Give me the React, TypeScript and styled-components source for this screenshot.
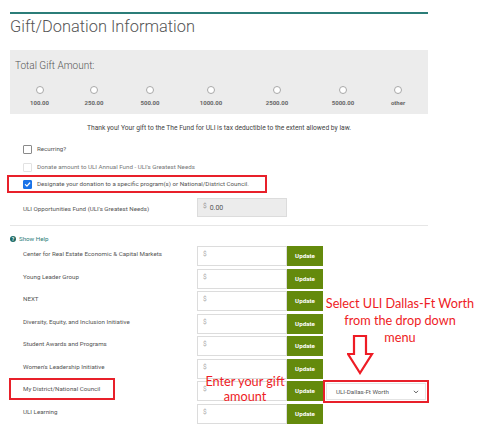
import React from 'react';
import styled, { createGlobalStyle } from 'styled-components';

const GlobalStyle = createGlobalStyle`
  html, body {
    margin: 0;
    padding: 0;
    background: #ffffff;
  }
  body {
    font-family: Roboto, "Liberation Sans", Arial, sans-serif;
    width: 480px;
    height: 426px;
    overflow: hidden;
  }
`;

const Page = styled.div`
  position: relative;
  width: 480px;
  height: 426px;
  box-sizing: border-box;
  padding: 12px 0 0 10px;
`;

const Section = styled.div`
  width: 418px;
  border-top: 2px solid #2b7d78;
`;

const Title = styled.h1`
  margin: 2px 0 0;
  font-size: 16.4px;
  line-height: 22px;
  font-weight: 300;
  color: #555;
`;

const AmountPanel = styled.div`
  margin-top: 12px;
  height: 64px;
  box-sizing: border-box;
  background: #ececec;
  padding: 10px 0 0 5px;
`;

const PanelTitle = styled.div`
  font-size: 10px;
  line-height: 12px;
  font-weight: 300;
  color: #555;
`;

const RadioRow = styled.div`
  display: grid;
  grid-template-columns: 49px 60px 52px 70px 62px 70px 40px;
  margin-top: 14px;
`;

const RadioOption = styled.label`
  display: flex;
  flex-direction: column;
  align-items: center;
  gap: 5px;
`;

const RadioCircle = styled.span`
  width: 6px;
  height: 6px;
  border-radius: 50%;
  border: 1px solid #a8a8a8;
  background: #fff;
`;

const RadioLabel = styled.span`
  font-size: 6px;
  line-height: 8px;
  font-weight: 700;
  color: #666;
`;

const Notice = styled.p`
  margin: 9px 0 0;
  text-align: center;
  font-size: 6.7px;
  line-height: 10px;
  color: #444;
  white-space: nowrap;
`;

const CheckList = styled.div`
  margin-top: 7px;
  display: flex;
  flex-direction: column;
`;

const CheckRow = styled.div<{ $highlight?: boolean }>`
  display: flex;
  align-items: center;
  gap: 5px;
  height: 18px;
  box-sizing: border-box;
  padding-left: ${p => (p.$highlight ? '14px' : '13px')};
  margin-left: ${p => (p.$highlight ? '-3px' : '0')};
  margin-top: ${p => (p.$highlight ? '-1px' : '0')};
  width: ${p => (p.$highlight ? '260px' : 'auto')};
  border: ${p => (p.$highlight ? '2px solid #e8202a' : 'none')};
`;

const CheckBox = styled.span<{ $checked?: boolean; $faded?: boolean }>`
  width: 9px;
  height: 9px;
  flex: none;
  box-sizing: border-box;
  border-radius: 1px;
  border: 1px solid ${p => (p.$checked ? '#1a73e8' : p.$faded ? '#e2e2e2' : '#8a8a8a')};
  background: ${p => (p.$checked ? '#1a73e8' : '#fff')};
  display: flex;
  align-items: center;
  justify-content: center;
  svg {
    width: 7px;
    height: 7px;
  }
`;

const CheckText = styled.span<{ $faded?: boolean }>`
  font-size: 6.2px;
  line-height: 10px;
  white-space: nowrap;
  color: ${p => (p.$faded ? '#777' : '#555')};
`;

const FundRow = styled.div`
  display: grid;
  grid-template-columns: 187px 90px;
  margin-top: 5px;
  align-items: center;
`;

const RowLabel = styled.div<{ $highlight?: boolean }>`
  font-size: 6.2px;
  line-height: 10px;
  color: #555;
  white-space: nowrap;
  box-sizing: border-box;
  padding-left: ${p => (p.$highlight ? '12px' : '13px')};
  padding-top: ${p => (p.$highlight ? '4px' : '3px')};
  ${p =>
    p.$highlight &&
    `
    margin: -3px 0 0 -1px;
    height: 22px;
    width: 106px;
    border: 2px solid #e8202a;
  `}
`;

const ReadonlyInput = styled.div`
  height: 19px;
  box-sizing: border-box;
  background: #ececec;
  border: 1px solid #dcdcdc;
  display: flex;
  align-items: center;
  padding-left: 5px;
  gap: 3px;
  font-size: 7px;
  color: #555;
  span {
    color: #999;
    font-size: 6.5px;
    margin-top: -3px;
  }
`;

const Divider = styled.hr`
  margin: 8px 0 0;
  border: none;
  border-top: 1px solid #e6e6e6;
`;

const HelpToggle = styled.div`
  margin-top: 8px;
  display: flex;
  align-items: center;
  gap: 3px;
  font-size: 6.2px;
  line-height: 10px;
  color: #2b7d78;
`;

const HelpDot = styled.span`
  width: 6px;
  height: 6px;
  border-radius: 50%;
  background: #1e6b66;
  color: #fff;
  font-size: 5px;
  font-weight: 700;
  line-height: 6px;
  text-align: center;
`;

const ProgramList = styled.div`
  margin-top: 2px;
  display: flex;
  flex-direction: column;
  gap: 2.5px;
`;

const ProgramRow = styled.div`
  display: grid;
  grid-template-columns: 187px 90px 36px auto;
  align-items: start;
  height: 20px;
`;

const AmountInput = styled.div`
  height: 20px;
  box-sizing: border-box;
  border: 1px solid #dcdcdc;
  background: #fff;
  padding: 3px 0 0 5px;
  font-size: 6.5px;
  color: #aaa;
`;

const UpdateButton = styled.button`
  height: 20px;
  border: none;
  padding: 0;
  background: #648a0c;
  color: #fff;
  font-family: Roboto, "Liberation Sans", Arial, sans-serif;
  font-size: 6.2px;
  font-weight: 700;
`;

const DropdownFrame = styled.div`
  margin: -1px 0 -2px;
  width: 106px;
  height: 23px;
  box-sizing: border-box;
  border: 2px solid #e8202a;
  padding: 1px;
`;

const Dropdown = styled.div`
  height: 100%;
  box-sizing: border-box;
  border: 1px solid #e4e4e4;
  display: flex;
  align-items: center;
  justify-content: space-between;
  padding: 0 6px 0 9px;
  font-size: 6.2px;
  color: #555;
  white-space: nowrap;
  svg {
    width: 6px;
    height: 6px;
  }
`;

const Callout = styled.div<{ $left: number; $top: number; $width: number; $lead: number }>`
  position: absolute;
  left: ${p => p.$left}px;
  top: ${p => p.$top}px;
  width: ${p => p.$width}px;
  line-height: ${p => p.$lead}px;
  text-align: center;
  white-space: nowrap;
  font-family: Lato, "Open Sans", "Liberation Sans", sans-serif;
  font-size: 12.7px;
  color: #ee1c25;
`;

const ArrowMark = styled.svg`
  position: absolute;
  left: 347px;
  top: 335px;
  width: 27px;
  height: 40px;
`;

const amounts = ['100.00', '250.00', '500.00', '1000.00', '2500.00', '5000.00', 'other'];

const programs = [
  'Center for Real Estate Economic & Capital Markets',
  'Young Leader Group',
  'NEXT',
  'Diversity, Equity, and Inclusion Initiative',
  'Student Awards and Programs',
  "Women's Leadership Initiative",
  'My District/National Council',
  'ULI Learning',
];

const CheckMark = () => (
  <svg viewBox="0 0 10 10" fill="none">
    <path d="M2 5.2 4.2 7.3 8.2 2.8" stroke="#fff" strokeWidth="1.8" strokeLinecap="round" strokeLinejoin="round" />
  </svg>
);

const App: React.FC = () => {
  return (
    <Page>
      <GlobalStyle />
      <Section>
        <Title>Gift/Donation Information</Title>

        <AmountPanel>
          <PanelTitle>Total Gift Amount:</PanelTitle>
          <RadioRow>
            {amounts.map(a => (
              <RadioOption key={a}>
                <RadioCircle />
                <RadioLabel>{a}</RadioLabel>
              </RadioOption>
            ))}
          </RadioRow>
        </AmountPanel>

        <Notice>
          Thank you! Your gift to the The Fund for ULI is tax deductible to the extent allowed by law.
        </Notice>

        <CheckList>
          <CheckRow>
            <CheckBox />
            <CheckText>Recurring?</CheckText>
          </CheckRow>
          <CheckRow>
            <CheckBox $faded />
            <CheckText $faded>Donate amount to ULI Annual Fund - ULI's Greatest Needs</CheckText>
          </CheckRow>
          <CheckRow $highlight>
            <CheckBox $checked>
              <CheckMark />
            </CheckBox>
            <CheckText>Designate your donation to a specific program(s) or National/District Council.</CheckText>
          </CheckRow>
        </CheckList>

        <FundRow>
          <RowLabel>ULI Opportunities Fund (ULI's Greatest Needs)</RowLabel>
          <ReadonlyInput>
            <span>$</span>0.00
          </ReadonlyInput>
        </FundRow>

        <Divider />

        <HelpToggle>
          <HelpDot>?</HelpDot>
          Show Help
        </HelpToggle>

        <ProgramList>
          {programs.map(name => {
            const isCouncil = name === 'My District/National Council';
            return (
              <ProgramRow key={name}>
                <RowLabel $highlight={isCouncil}>{name}</RowLabel>
                <AmountInput>$</AmountInput>
                <UpdateButton>Update</UpdateButton>
                {isCouncil && (
                  <DropdownFrame>
                    <Dropdown>
                      ULI-Dallas-Ft Worth
                      <svg viewBox="0 0 10 10" fill="none">
                        <path d="M2 3.5 5 6.5 8 3.5" stroke="#555" strokeWidth="1.6" strokeLinecap="round" strokeLinejoin="round" />
                      </svg>
                    </Dropdown>
                  </DropdownFrame>
                )}
              </ProgramRow>
            );
          })}
        </ProgramList>
      </Section>

      <Callout $left={320} $top={295} $width={160} $lead={17}>
        Select ULI Dallas-Ft Worth
        <br />
        from the drop down
        <br />
        menu
      </Callout>

      <ArrowMark viewBox="0 0 27 40" fill="none">
        <path
          d="M7 1H19V19H25L13 38 1 19H7Z"
          stroke="#ee1c25"
          strokeWidth="2.2"
          strokeLinejoin="miter"
        />
      </ArrowMark>

      <Callout $left={200} $top={374} $width={90} $lead={15}>
        Enter your gift
        <br />
        amount
      </Callout>
    </Page>
  );
};

export default App;
